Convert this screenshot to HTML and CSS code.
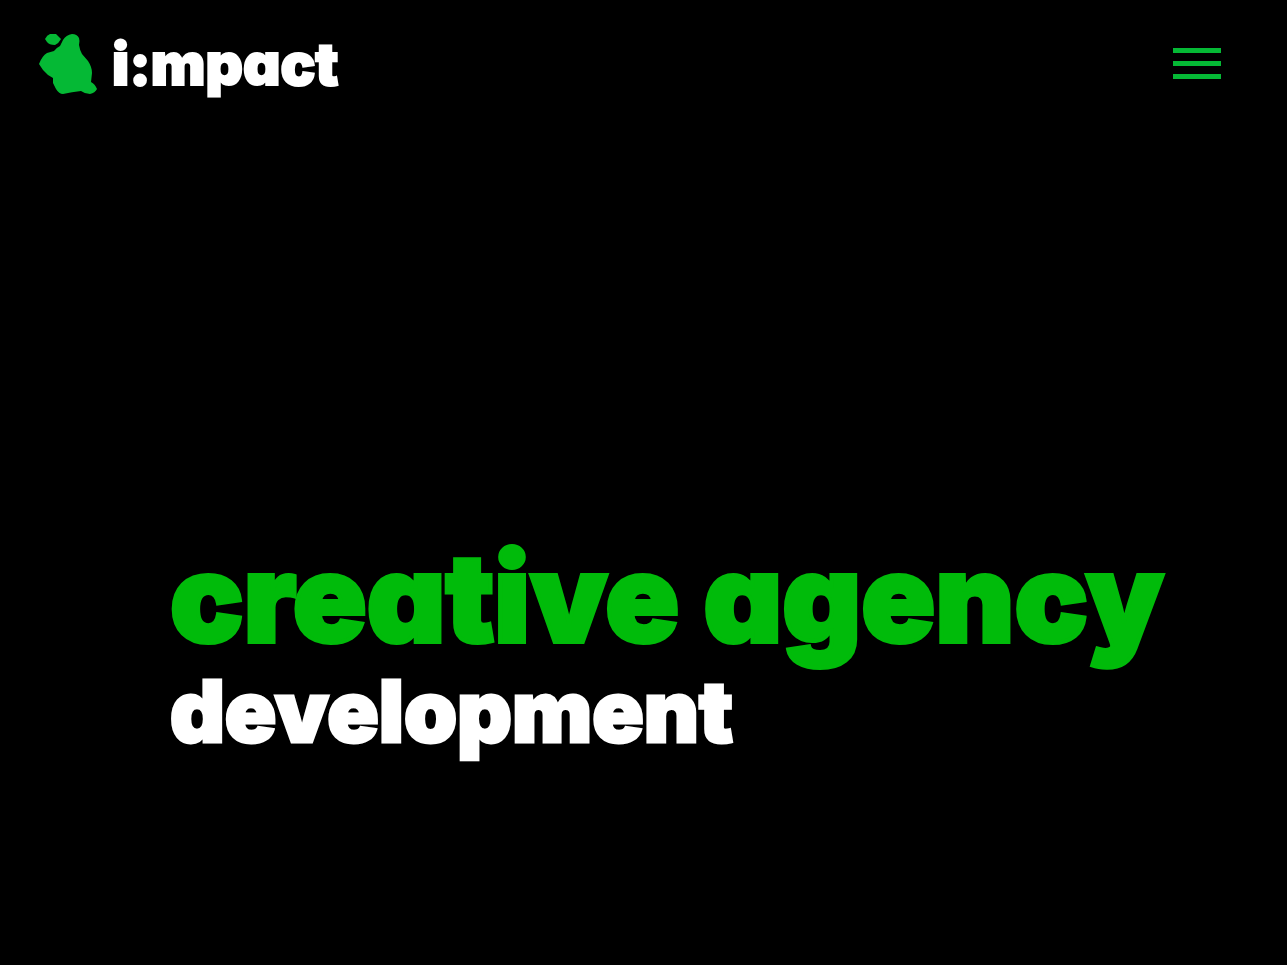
FILE: index.html
```html
<!DOCTYPE html>
<html lang="en">
<head>
<meta charset="utf-8">
<meta name="viewport" content="width=device-width, initial-scale=1">
<title>i:mpact</title>
<link rel="stylesheet" href="styles.css">
</head>
<body>
<header class="header">
  <a class="brand" href="#">
    <svg class="brand-mark" viewBox="0 0 60 62" aria-hidden="true">
      <path d="M7 6Q9 2 12 1L18 1L23 6Q21 10 17 12Q11 12 9 9Z"/>
      <path d="M25 7Q28 2 34 1Q39 1 41 5Q42 8 41 12Q42 18 44 21L50 28Q54 34 54 40L53 49Q57 51 59 56Q57 60 52 61Q47 61 43 58Q34 59 25 61Q21 61 18 56L15 50L15 45Q9 42 5 37L1 31Q4 23 9 20L16 18Q18 15 22 13Z"/>
    </svg>
    <span class="brand-name">i:mpact</span>
  </a>
  <button class="menu" type="button" aria-label="Open menu">
    <span class="menu-bar"></span>
    <span class="menu-bar"></span>
    <span class="menu-bar"></span>
  </button>
</header>
<main class="hero">
  <h1 class="hero-title">creative agency</h1>
  <p class="hero-topic">development</p>
</main>
</body>
</html>
```
FILE: styles.css
```css
* { box-sizing: border-box; }

body {
  margin: 0;
  min-height: 100vh;
  display: flex;
  flex-direction: column;
  background: #000;
  color: #fff;
  font-family: Inter, "Open Sans", sans-serif;
  font-weight: 900;
  /* single-storey "a" */
  font-feature-settings: "cv11";
}

.header {
  display: flex;
  align-items: center;
  justify-content: space-between;
  padding: 23px 66px 23px 38px;
}

.brand {
  display: flex;
  align-items: center;
  gap: 14px;
  color: inherit;
  text-decoration: none;
}

.brand-mark {
  width: 60px;
  height: 62px;
  fill: #05b935;
}

.brand-name {
  font-size: 58px;
  line-height: 82px;
  -webkit-text-stroke: 2px currentColor;
}

.menu {
  display: flex;
  flex-direction: column;
  gap: 8px;
  width: 48px;
  padding: 0 0 2px;
  border: 0;
  background: none;
  cursor: pointer;
}

.menu-bar {
  height: 5px;
  background: #05b935;
}

.hero {
  flex: 1;
  display: flex;
  flex-direction: column;
  justify-content: flex-end;
  padding: 0 40px 203px 170px;
}

.hero-title {
  margin: 0;
  color: #00bb0a;
  font-size: 122px;
  font-weight: 900;
  line-height: 128px;
  white-space: nowrap;
  -webkit-text-stroke: 4px currentColor;
}

.hero-topic {
  margin: 0;
  font-size: 85px;
  line-height: 100px;
  -webkit-text-stroke: 3px currentColor;
}
```
